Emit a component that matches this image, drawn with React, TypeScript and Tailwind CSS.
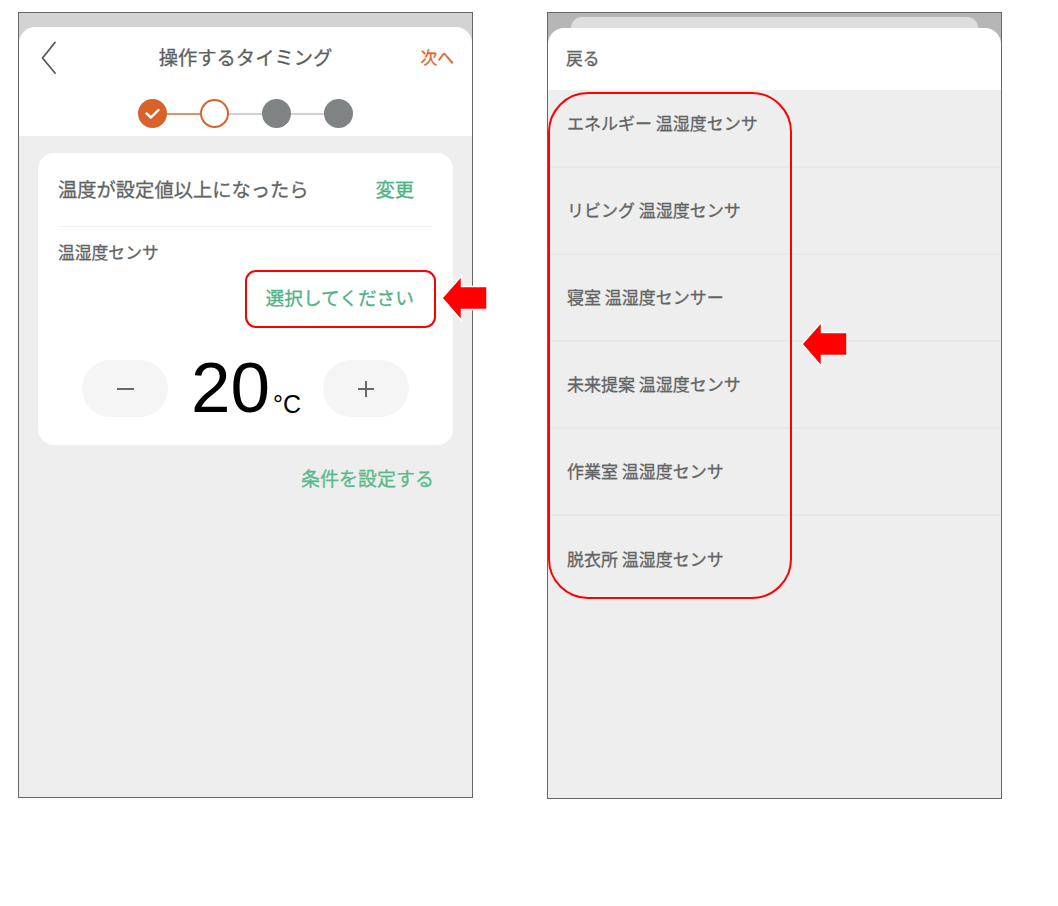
import React from "react";

const jp = { fontFamily: '"Noto Sans CJK JP", "Noto Sans", sans-serif' };

function Arrow({ className }: { className: string }) {
  return (
    <svg className={className} width="48" height="52" viewBox="0 0 48 52">
      <path d="M1 26 L20.5 4 L20.5 14.5 L46 14.5 L46 37.5 L20.5 37.5 L20.5 48.5 Z" fill="#ff0000" stroke="#ffffff" strokeWidth="1.5" />
    </svg>
  );
}

function Dot() {
  return <div className="w-[29px] h-[29px] rounded-full bg-[#7f8383]" />;
}

function Line({ on }: { on?: boolean }) {
  return <div className={on ? "w-[33px] h-[2px] bg-[#e58f68]" : "w-[33px] h-[2px] bg-[#cfd1d1]"} />;
}

function Screen1() {
  return (
    <div className="relative w-[455px] h-[786px] border border-[#666666] bg-[#d2d2d2] pt-[14px] flex flex-col">
      <div className="bg-white rounded-t-[16px] h-[109px] shrink-0 flex flex-col">
        <div className="relative h-[58px] flex items-center justify-center pt-[3px]">
          <svg className="absolute left-[21px] top-[14px]" width="18" height="34" viewBox="0 0 18 34" fill="none">
            <path d="M15 1.5 L2.5 17 L15 32" stroke="#555858" strokeWidth="1.8" strokeLinecap="round" strokeLinejoin="round" />
          </svg>
          <span className="text-[19.3px] text-[#5c5e5e] [-webkit-text-stroke:0.3px]">操作するタイミング</span>
          <span className="absolute right-[18px] top-[17px] text-[16.8px] leading-[26px] text-[#e0642f] [-webkit-text-stroke:0.3px]">次へ</span>
        </div>
        <div className="flex items-center justify-center mt-[14px] pr-[1px]">
          <div className="w-[29px] h-[29px] rounded-full bg-[#d9622b] flex items-center justify-center">
            <svg width="17" height="13" viewBox="0 0 17 13" fill="none">
              <path d="M2.5 6.5 L7 10.5 L14.5 3" stroke="#ffffff" strokeWidth="2.4" strokeLinecap="round" strokeLinejoin="round" />
            </svg>
          </div>
          <Line on />
          <div className="w-[29px] h-[29px] rounded-full border-2 border-[#d9622b] bg-white" />
          <Line />
          <Dot />
          <Line />
          <Dot />
        </div>
      </div>
      <div className="flex-1 bg-[#eeeeee] px-[19px] pt-[17px]">
        <div className="bg-white rounded-[16px] h-[292px] px-[20px] flex flex-col">
          <div className="h-[74px] shrink-0 flex items-center justify-between border-b border-[#f0f0f0]">
            <span className="text-[19.3px] text-[#626464] [-webkit-text-stroke:0.3px]">温度が設定値以上になったら</span>
            <span className="text-[19.3px] text-[#4fb283] mr-[19px] [-webkit-text-stroke:0.3px]">変更</span>
          </div>
          <div className="mt-[13px] text-[16.8px] leading-[25px] text-[#626464] [-webkit-text-stroke:0.3px]">温湿度センサ</div>
          <div className="self-end mt-[16px] mr-[19px] text-[18.7px] leading-[32px] text-[#4fb283] [-webkit-text-stroke:0.3px]">選択してください</div>
          <div className="flex items-center mt-[47px] ml-[24px]">
            <div className="w-[86px] h-[57px] rounded-full bg-[#f5f5f5] flex items-center justify-center">
              <div className="w-[17px] h-[2px] bg-[#666868]" />
            </div>
            <div className="w-[155px] flex items-end justify-center text-black h-[57px] pl-[1px]" style={{ fontFamily: '"Liberation Sans", sans-serif' }}>
              <span className="text-[71px] leading-[57px] mb-[1px]">20</span>
              <span className="text-[25px] leading-[24px] mb-[1px] ml-[3px]">°C</span>
            </div>
            <div className="w-[86px] h-[57px] rounded-full bg-[#f5f5f5] flex items-center justify-center">
              <svg width="18" height="18" viewBox="0 0 18 18">
                <path d="M9 1 V17 M1 9 H17" stroke="#666868" strokeWidth="2" />
              </svg>
            </div>
          </div>
        </div>
        <div className="text-right mt-[19px] pr-[19px] text-[19px] leading-[28px] text-[#5bb88c] [-webkit-text-stroke:0.3px]">条件を設定する</div>
      </div>
      <div className="absolute left-[226px] top-[257px] w-[191px] h-[58px] border-2 border-[#ff0000] rounded-[11px]" />
      <Arrow className="absolute left-[422px] top-[259px]" />
    </div>
  );
}

const rows = ["リビング 温湿度センサ", "寝室 温湿度センサー", "未来提案 温湿度センサ", "作業室 温湿度センサ", "脱衣所 温湿度センサ"];

function Screen2() {
  return (
    <div className="relative w-[455px] h-[787px] border border-[#666666] bg-[#b6b6b6] flex flex-col overflow-hidden">
      <div className="h-[11px] mt-[4px] mx-[23px] shrink-0 bg-[#dedede] rounded-t-[12px]" />
      <div className="bg-white rounded-t-[16px] h-[62px] shrink-0 flex items-center pl-[18px]">
        <span className="text-[16.8px] text-[#626464] [-webkit-text-stroke:0.3px]">戻る</span>
      </div>
      <div className="flex-1 bg-[#eeeeee]">
        <div className="h-[78px] border-b-2 border-[#e8e8e8] flex items-center pl-[19px] pb-[11px] text-[17px] text-[#626464] [-webkit-text-stroke:0.3px]">エネルギー 温湿度センサ</div>
        {rows.map((r, i) => (
          <div
            key={r}
            className={i < 4 ? "h-[87px] border-b-2 border-[#e8e8e8] flex items-center pl-[19px] pb-[2px] text-[17px] text-[#626464] [-webkit-text-stroke:0.3px]" : "h-[87px] flex items-center pl-[19px] pb-[2px] text-[17px] text-[#626464] [-webkit-text-stroke:0.3px]"}
          >
            {r}
          </div>
        ))}
      </div>
      <div className="absolute left-0 top-[79px] w-[244px] h-[507px] border-2 border-[#ff0000] rounded-[40px]" />
      <Arrow className="absolute left-[253px] top-[305px]" />
    </div>
  );
}

export default function App() {
  return (
    <div className="w-[1058px] h-[906px] bg-white overflow-hidden flex items-start gap-[74px] pl-[18px] pt-[12px]" style={jp}>
      <Screen1 />
      <Screen2 />
    </div>
  );
}
